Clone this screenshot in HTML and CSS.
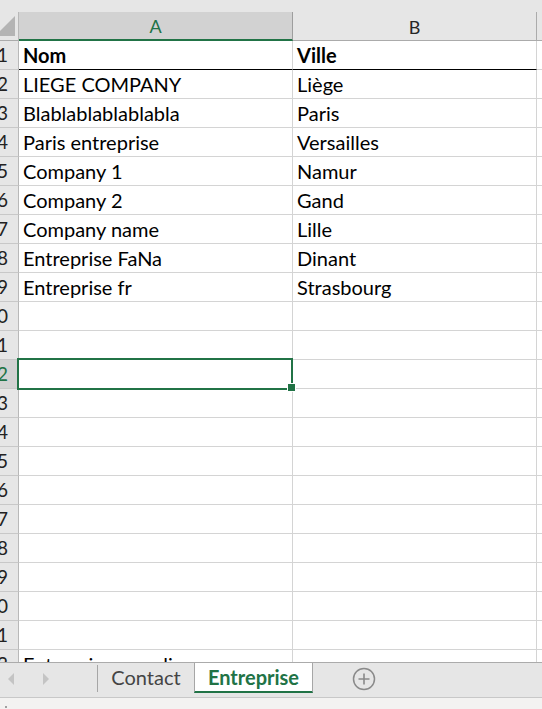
FILE: index.html
```html
<!DOCTYPE html>
<html>
<head>
<meta charset="utf-8">
<link rel="stylesheet" href="styles.css">
</head>
<body>
<div class="app">
  <div class="sheet">
    <div class="topstrip"></div>
    <div class="grid">
      <div class="corner"><span class="tri"></span></div>
      <div class="colhdr sel">A</div>
      <div class="colhdr">B</div>
      <div class="colhdr last"></div>

      <div class="rh"><span>1</span></div><div class="c hdrrow b">Nom</div><div class="c hdrrow b">Ville</div><div class="c x"></div>
      <div class="rh"><span>2</span></div><div class="c">LIEGE COMPANY</div><div class="c">Liège</div><div class="c x"></div>
      <div class="rh"><span>3</span></div><div class="c">Blablablablablabla</div><div class="c">Paris</div><div class="c x"></div>
      <div class="rh"><span>4</span></div><div class="c">Paris entreprise</div><div class="c">Versailles</div><div class="c x"></div>
      <div class="rh"><span>5</span></div><div class="c">Company 1</div><div class="c">Namur</div><div class="c x"></div>
      <div class="rh"><span>6</span></div><div class="c">Company 2</div><div class="c">Gand</div><div class="c x"></div>
      <div class="rh"><span>7</span></div><div class="c">Company name</div><div class="c">Lille</div><div class="c x"></div>
      <div class="rh"><span>8</span></div><div class="c">Entreprise FaNa</div><div class="c">Dinant</div><div class="c x"></div>
      <div class="rh"><span>9</span></div><div class="c">Entreprise fr</div><div class="c">Strasbourg</div><div class="c x"></div>
      <div class="rh"><span>10</span></div><div class="c"></div><div class="c"></div><div class="c x"></div>
      <div class="rh"><span>11</span></div><div class="c"></div><div class="c"></div><div class="c x"></div>
      <div class="rh selrow"><span>12</span></div><div class="c active"></div><div class="c"></div><div class="c x"></div>
      <div class="rh"><span>13</span></div><div class="c"></div><div class="c"></div><div class="c x"></div>
      <div class="rh"><span>14</span></div><div class="c"></div><div class="c"></div><div class="c x"></div>
      <div class="rh"><span>15</span></div><div class="c"></div><div class="c"></div><div class="c x"></div>
      <div class="rh"><span>16</span></div><div class="c"></div><div class="c"></div><div class="c x"></div>
      <div class="rh"><span>17</span></div><div class="c"></div><div class="c"></div><div class="c x"></div>
      <div class="rh"><span>18</span></div><div class="c"></div><div class="c"></div><div class="c x"></div>
      <div class="rh"><span>19</span></div><div class="c"></div><div class="c"></div><div class="c x"></div>
      <div class="rh"><span>20</span></div><div class="c"></div><div class="c"></div><div class="c x"></div>
      <div class="rh"><span>21</span></div><div class="c"></div><div class="c"></div><div class="c x"></div>
      <div class="rh"><span>22</span></div><div class="c">Entreprise pour lier</div><div class="c"></div><div class="c x"></div>
    </div>
  </div>
  <div class="tabbar">
    <div class="nav">
      <span class="arrow left"></span>
      <span class="arrow right"></span>
    </div>
    <div class="sep"></div>
    <div class="tab">Contact</div>
    <div class="tab current">Entreprise</div>
    <div class="add">
      <svg width="24" height="24" viewBox="0 0 24 24">
        <circle cx="12" cy="12" r="10.5" fill="none" stroke="#8a8a8a" stroke-width="1.5"/>
        <path d="M12 6.5v11M6.5 12h11" stroke="#8a8a8a" stroke-width="1.6"/>
      </svg>
    </div>
  </div>
  <div class="status"><span class="dot"></span></div>
</div>
</body>
</html>
```

FILE: styles.css
```css
* { box-sizing: border-box; }
html, body { margin: 0; padding: 0; }
body {
  font-family: Lato, "Liberation Sans", sans-serif;
  background: #ffffff;
  width: 542px;
  height: 709px;
  overflow: hidden;
}
.app {
  display: flex;
  flex-direction: column;
  height: 709px;
}
.sheet {
  height: 662px;
  overflow: hidden;
  flex: none;
}
.topstrip {
  height: 12px;
  background: #e6e6e6;
}
.grid {
  display: grid;
  grid-template-columns: 19px 274px 244px 1fr;
  grid-auto-rows: 29px;
}
.corner {
  background: #e6e6e6;
  border-right: 1px solid #b8b8b8;
  border-bottom: 1px solid #ababab;
  position: relative;
  overflow: hidden;
}
.corner .tri {
  position: absolute;
  right: 3px;
  bottom: 4px;
  width: 0;
  height: 0;
  border-left: 20px solid transparent;
  border-bottom: 20px solid #b4b4b4;
}
.colhdr {
  background: #e6e6e6;
  border-right: 1px solid #ababab;
  border-bottom: 1px solid #ababab;
  font-size: 18px;
  color: #262626;
  display: flex;
  justify-content: center;
  align-items: center;
  line-height: 28px;
  padding-top: 1px;
}
.colhdr.sel {
  background: #d2d2d2;
  color: #217346;
  border-right-color: #9e9e9e;
  border-bottom: 2px solid #217346;
}
.colhdr.last {
  border-right: none;
}
.rh {
  background: #e6e6e6;
  border-right: 1px solid #b8b8b8;
  border-bottom: 1px solid #c8c8c8;
  display: flex;
  justify-content: flex-end;
  overflow: hidden;
  padding-right: 10px;
  font-size: 19px;
  line-height: 28px;
  color: #222222;
}
.rh span { flex: none; }
.rh.selrow {
  background: #d2d2d2;
  color: #217346;
}
.c {
  border-right: 1px solid #d4d4d4;
  border-bottom: 1px solid #d4d4d4;
  font-size: 20px;
  line-height: 28px;
  padding-left: 4px;
  color: #000000;
  white-space: nowrap;
  position: relative;
}
.c.x { border-right: none; }
.c.b { font-weight: 700; }
.c.hdrrow { border-bottom: 1px solid #000000; }
.c.active::after {
  content: "";
  position: absolute;
  left: -2px;
  top: -2px;
  right: -1px;
  bottom: -2px;
  border: 2px solid #217346;
}
.c.active::before {
  content: "";
  position: absolute;
  right: -4px;
  bottom: -4px;
  width: 7px;
  height: 7px;
  background: #217346;
  border: 1px solid #ffffff;
  z-index: 2;
}
.tabbar {
  height: 35px;
  flex: none;
  background: #e6e6e6;
  border-top: 1px solid #ababab;
  display: flex;
  align-items: flex-start;
}
.nav {
  width: 97px;
  height: 33px;
  position: relative;
  flex: none;
}
.arrow {
  position: absolute;
  top: 10px;
  width: 0;
  height: 0;
  border-top: 6px solid transparent;
  border-bottom: 6px solid transparent;
}
.arrow.left {
  left: 8px;
  border-right: 6px solid #c4c4c4;
}
.arrow.right {
  left: 43px;
  border-left: 6px solid #c4c4c4;
}
.sep {
  width: 1px;
  height: 27px;
  margin-top: 2px;
  background: #a6a6a6;
  flex: none;
}
.tab {
  width: 96px;
  height: 30px;
  flex: none;
  font-size: 20px;
  line-height: 28px;
  color: #444444;
  text-align: center;
}
.tab.current {
  width: 119px;
  background: #ffffff;
  border-left: 1px solid #a6a6a6;
  border-right: 1px solid #a6a6a6;
  border-bottom: 2px solid #217346;
  color: #217346;
  font-weight: 700;
}
.add {
  margin-left: 39px;
  margin-top: 4px;
  width: 24px;
  height: 24px;
  flex: none;
}
.add svg { display: block; }
.status {
  height: 12px;
  flex: none;
  background: #f3f2f1;
  border-top: 1px solid #c8c8c8;
  position: relative;
}
.status .dot {
  position: absolute;
  left: 5px;
  top: 8px;
  width: 2px;
  height: 2px;
  background: #a0a0a0;
}
```
